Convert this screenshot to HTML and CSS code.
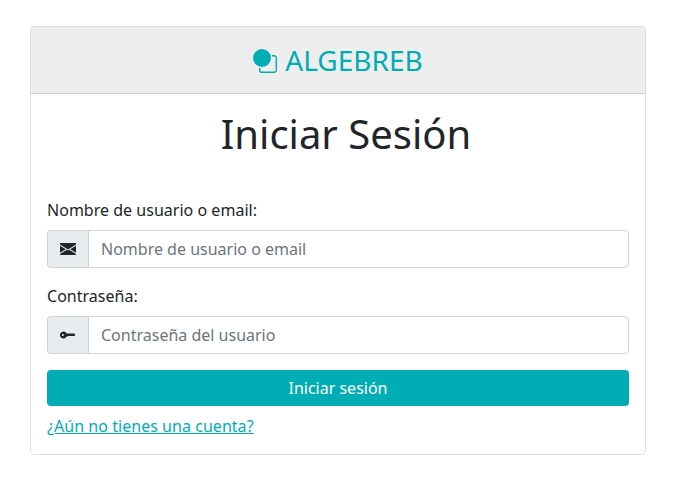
FILE: index.html
```html
<!DOCTYPE html>
<html lang="es">
<head>
<meta charset="utf-8">
<title>Iniciar Sesión</title>
<link rel="stylesheet" href="styles.css">
</head>
<body>
<main class="card">
  <header class="card-header">
    <svg class="logo" viewBox="0 0 24 24" fill="currentColor"><circle cx="9" cy="9" r="9"/><path d="M19 6.700h2.200a2.100 2.100 0 0 1 2.100 2.100v12.400a2.100 2.100 0 0 1-2.100 2.100H8.800a2.100 2.100 0 0 1-2.100-2.100V19" fill="none" stroke="currentColor" stroke-width="1.400"/></svg>
    <span>ALGEBREB</span>
  </header>
  <form class="card-body">
    <h1>Iniciar Sesión</h1>
    <label for="user">Nombre de usuario o email:</label>
    <div class="input-group">
      <span class="addon"><svg viewBox="0 0 16 16" fill="currentColor"><path d="M0 2h16v1.555L8 8.414 0 3.555ZM0 4.697v7.104l5.803-3.558L0 4.697ZM6.761 8.830L0 12.970V14h16v-1.030L9.239 8.830 8 9.586l-1.239-.757Zm3.436-.586L16 11.801V4.697l-5.803 3.546Z"/></svg></span>
      <input id="user" type="text" placeholder="Nombre de usuario o email">
    </div>
    <label for="password">Contraseña:</label>
    <div class="input-group">
      <span class="addon"><svg viewBox="0 0 16 16" fill="currentColor"><path fill-rule="evenodd" d="M3.500 11.500a3.500 3.500 0 1 1 3.163-5H14.300L15.400 8 14.600 9.100H8.200L7.200 9.500H6.663a3.500 3.500 0 0 1-3.163 2zM2.900 9a1 1 0 1 0 0-2 1 1 0 0 0 0 2z"/></svg></span>
      <input id="password" type="password" placeholder="Contraseña del usuario">
    </div>
    <button type="button">Iniciar sesión</button>
    <a href="#">¿Aún no tienes una cuenta?</a>
  </form>
</main>
</body>
</html>
```
FILE: styles.css
```css
* { box-sizing: border-box; }
body {
  margin: 0;
  padding: 26px 29px 0 30px;
  font: 16px/24px "Noto Sans", sans-serif;
  color: #212529;
  background: #fff;
}
.card {
  height: 429px;
  border: 1px solid #dfdfdf;
  border-radius: 4px;
  overflow: hidden;
}
.card-header {
  display: flex;
  align-items: center;
  justify-content: center;
  gap: 8px;
  height: 67px;
  background: #eee;
  border-bottom: 1px solid #d0d0d0;
  color: #00adb5;
  font-size: 28px;
}
.logo { width: 24px; height: 24px; margin-top: 2px; }
.card-body { padding: 16px; }
h1 {
  margin: 0 0 40px;
  padding-left: 16px;
  text-align: center;
  font-size: 40px;
  line-height: 48px;
  font-weight: 400;
}
label { display: block; margin-bottom: 8px; letter-spacing: 0.02px; }
.input-group { display: flex; height: 38px; margin-bottom: 16px; }
.addon {
  display: flex;
  align-items: center;
  justify-content: flex-start;
  padding-left: 12px;
  width: 41px;
  border: 1px solid #ced4da;
  border-right: 0;
  border-radius: 4px 0 0 4px;
  background: #e9ecef;
}
.addon svg { width: 16px; height: 16px; }
input {
  flex: 1;
  min-width: 0;
  padding: 0 12px;
  border: 1px solid #ced4da;
  border-radius: 0 4px 4px 0;
  font: inherit;
  background: #fff;
}
input::placeholder { color: #6c757d; opacity: 1; }
button {
  display: block;
  width: 100%;
  height: 36px;
  margin-bottom: 8px;
  border: 0;
  border-radius: 4px;
  background: #00adb5;
  color: #fff;
  font: inherit;
}
a { color: #00adb5; letter-spacing: 0.04px; }
```
